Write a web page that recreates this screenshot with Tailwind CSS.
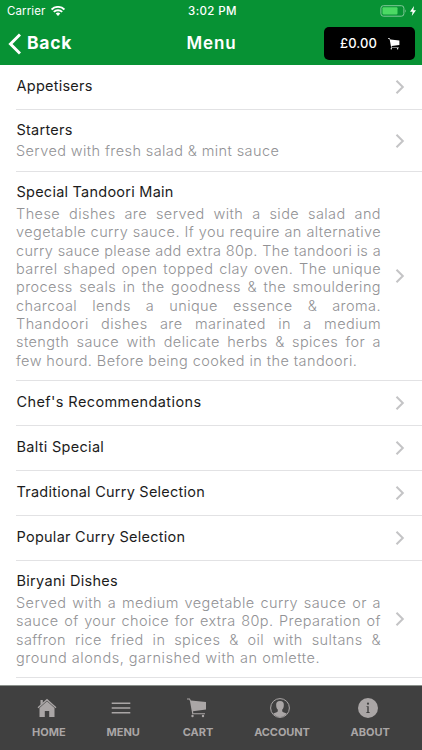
<!DOCTYPE html>
<html lang="en">
<head>
<meta charset="utf-8">
<title>Menu</title>
<script src="https://cdn.jsdelivr.net/npm/@tailwindcss/browser@4"></script>
</head>
<body class="bg-white">
<svg class="hidden"><defs>
<symbol id="chev" viewBox="0 0 10 16"><path d="M1.500 1.800 7.800 8l-6.300 6.200" fill="none" stroke="#c4c4c6" stroke-width="2"/></symbol>
<symbol id="cart" viewBox="0 0 20 20"><path d="M0 .5h2.800l1.100 2L19 4v7.500L6 13.300l.3 2H18v1H5.300L3 3.200 2.300 1.500H0z" fill="currentColor"/><circle cx="5.500" cy="18" r="1.200" fill="currentColor"/><circle cx="16" cy="18" r="1.200" fill="currentColor"/></symbol>
</defs></svg>
<div class="flex h-[750px] w-[422px] flex-col overflow-hidden font-['Inter','Noto_Sans',sans-serif]">
<header class="h-[65px] shrink-0 bg-[#079234] text-white">
  <div class="grid h-[22px] grid-cols-3 items-center pr-[6px] pl-[7px] text-[11.5px] leading-[22px]">
    <div class="flex items-center gap-[6px]"><span class="tracking-[0.1px]">Carrier</span>
      <svg class="h-[10px] w-[14px]" viewBox="0 0 14 10" fill="none" stroke="white" stroke-width="1.900"><path d="M.6 3.500a9.200 9.200 0 0 1 12.800 0M2.800 5.900a6 6 0 0 1 8.400 0"/><path d="M4.700 7.500a3.300 3.300 0 0 1 4.600 0L7 9.900z" fill="white" stroke="none"/></svg></div>
    <div class="pl-[2px] text-center font-medium tracking-[0.4px]">3:02 PM</div>
    <div class="flex items-center justify-end gap-[3px]">
      <svg class="h-[12px] w-[27px]" viewBox="0 0 27 12"><rect x=".9" y=".7" width="23" height="10.500" rx="2.500" fill="none" stroke="#83c99a"/><rect x="2.500" y="2.300" width="15" height="7.300" rx="1" fill="#4cd964"/><path d="M25.200 4.200q1.500 1.700 0 3.500z" fill="#83c99a"/></svg>
      <svg class="h-[10px] w-[6px]" viewBox="0 0 6 10"><path d="M4 0 0 5.700h2.600L1.800 10 6 4.200H3.400z" fill="white"/></svg>
    </div>
  </div>
  <div class="grid h-[43px] grid-cols-3 items-center pr-[7px] pl-[8px]">
    <div class="flex items-center gap-[6px] text-[17.500px] font-bold"><svg class="h-[22px] w-[13px]" viewBox="0 0 13 22"><path d="M12 1.500 2.500 11l9.500 9.500" fill="none" stroke="white" stroke-width="3"/></svg><span class="tracking-[0.7px]">Back</span></div>
    <div class="text-center text-[17px] font-semibold tracking-[0.9px]">Menu</div>
    <div class="flex h-[33px] w-[91px] items-center justify-between justify-self-end rounded-[5px] bg-black pr-[15px] pl-[16px] text-[13px] font-medium"><span class="tracking-[0.1px]">£0.00</span><svg class="size-[12px]"><use href="#cart" width="12" height="12"/></svg></div>
  </div>
</header>
<main class="h-[620px] shrink-0 overflow-hidden pl-[16px] text-[14.500px] leading-[20px] text-[#1c1c1c]">
  <section class="flex h-[45px] items-center justify-between border-b border-[#e2e2e4] pr-[17px]"><h2 class="mt-[-2px] pl-[0.5px] tracking-[0.25px]">Appetisers</h2><svg class="h-[16px] w-[10px]"><use href="#chev"/></svg></section>
  <section class="flex h-[62px] items-center justify-between border-b border-[#e2e2e4] pr-[17px]"><div class="w-[365px]"><h2 class="pl-[0.5px] tracking-[0.25px]">Starters</h2><p class="mt-[2px] leading-[18.300px] tracking-[0.400px] text-[#929295] font-light">Served with fresh salad &amp; mint sauce</p></div><svg class="h-[16px] w-[10px]"><use href="#chev"/></svg></section>
  <section class="flex h-[209px] items-center justify-between border-b border-[#e2e2e4] pr-[17px]"><div class="w-[365px]"><h2 class="pl-[0.5px] tracking-[0.24px]">Special Tandoori Main</h2>
    <div class="mt-[3px] leading-[18.300px] font-light tracking-[0.42px] text-[#929295]">
      <p class="text-justify whitespace-nowrap [text-align-last:justify]">These dishes are served with a side salad and</p>
      <p class="text-justify whitespace-nowrap [text-align-last:justify]">vegetable curry sauce. If you require an alternative</p>
      <p class="text-justify tracking-[0.32px] whitespace-nowrap [text-align-last:justify]">curry sauce please add extra 80p. The tandoori is a</p>
      <p class="text-justify whitespace-nowrap [text-align-last:justify]">barrel shaped open topped clay oven. The unique</p>
      <p class="text-justify whitespace-nowrap [text-align-last:justify]">process seals in the goodness &amp; the smouldering</p>
      <p class="text-justify whitespace-nowrap [text-align-last:justify]">charcoal lends a unique essence &amp; aroma.</p>
      <p class="text-justify whitespace-nowrap [text-align-last:justify]">Thandoori dishes are marinated in a medium</p>
      <p class="text-justify whitespace-nowrap [text-align-last:justify]">stength sauce with delicate herbs &amp; spices for a</p>
      <p>few hourd. Before being cooked in the tandoori.</p>
    </div></div><svg class="h-[16px] w-[10px]"><use href="#chev"/></svg></section>
  <section class="flex h-[45px] items-center justify-between border-b border-[#e2e2e4] pr-[17px]"><h2 class="mt-[-2px] pl-[0.5px] tracking-[0.4px]">Chef's Recommendations</h2><svg class="h-[16px] w-[10px]"><use href="#chev"/></svg></section>
  <section class="flex h-[45px] items-center justify-between border-b border-[#e2e2e4] pr-[17px]"><h2 class="mt-[-2px] pl-[0.5px] tracking-[0.3px]">Balti Special</h2><svg class="h-[16px] w-[10px]"><use href="#chev"/></svg></section>
  <section class="flex h-[45px] items-center justify-between border-b border-[#e2e2e4] pr-[17px]"><h2 class="mt-[-2px] pl-[0.5px] tracking-[0.24px]">Traditional Curry Selection</h2><svg class="h-[16px] w-[10px]"><use href="#chev"/></svg></section>
  <section class="flex h-[45px] items-center justify-between border-b border-[#e2e2e4] pr-[17px]"><h2 class="mt-[-2px] pl-[0.5px] tracking-[0.26px]">Popular Curry Selection</h2><svg class="h-[16px] w-[10px]"><use href="#chev"/></svg></section>
  <section class="flex h-[117px] items-center justify-between border-b border-[#e2e2e4] pr-[17px]"><div class="w-[365px]"><h2 class="pl-[0.5px] tracking-[0.3px]">Biryani Dishes</h2>
    <div class="mt-[3px] leading-[18.300px] font-light tracking-[0.42px] text-[#929295]">
      <p class="text-justify whitespace-nowrap [text-align-last:justify]">Served with a medium vegetable curry sauce or a</p>
      <p class="text-justify whitespace-nowrap [text-align-last:justify]">sauce of your choice for extra 80p. Preparation of</p>
      <p class="text-justify whitespace-nowrap [text-align-last:justify]">saffron rice fried in spices &amp; oil with sultans &amp;</p>
      <p class="tracking-[0.520px]">ground alonds, garnished with an omlette.</p>
    </div></div><svg class="h-[16px] w-[10px]"><use href="#chev"/></svg></section>
</main>
<nav class="flex h-[65px] shrink-0 justify-between border-t border-[#8b918c] bg-[#404040] pr-[32px] pl-[32px] text-[11px] font-bold text-[#aaa6a6]">
  <a class="flex flex-col items-center pt-[12px]"><svg class="mr-[4px] size-[20px]" viewBox="0 0 20 20" fill="currentColor"><path d="M10 3.300 2.500 10v9h5.300v-6h4.400v6h5.300v-9z"/><path d="M1 9.800 10 1.700l9 8.100" fill="none" stroke="currentColor" stroke-width="1.300"/><path d="M3.500 2h2.300v3L3.500 7z"/></svg><span class="mt-[6px] leading-[16px]">HOME</span></a>
  <a class="flex flex-col items-center pt-[12px]"><svg class="mr-[4px] size-[20px]" viewBox="0 0 20 20"><path d="M.7 5.300h18.600M.7 10h18.600M.7 14.700h18.600" stroke="currentColor" stroke-width="1.500"/></svg><span class="mt-[6px] leading-[16px]">MENU</span></a>
  <a class="flex flex-col items-center pt-[12px] pl-[2px]"><svg class="mr-[3px] size-[20px]"><use href="#cart"/></svg><span class="mt-[6px] leading-[16px]">CART</span></a>
  <a class="flex flex-col items-center pt-[12px]"><svg class="mr-[4px] size-[20px]" viewBox="0 0 20 20"><circle cx="10" cy="10" r="9.400" fill="none" stroke="currentColor"/><path d="M10 3c3 0 4.200 1.900 3.800 4.400 0 2-.7 3.300-1.600 4.200v1.600c.4 1 2.800 1.300 4.600 2.300A9 9 0 0 1 10 19a9 9 0 0 1-6.800-3.500c1.800-1 4.200-1.300 4.600-2.300v-1.600c-.9-.9-1.600-2.200-1.600-4.200C5.800 4.900 7 3 10 3z" fill="currentColor"/></svg><span class="mt-[6px] leading-[16px] tracking-[-0.1px]">ACCOUNT</span></a>
  <a class="flex flex-col items-center pt-[12px]"><svg class="mr-[4px] size-[20px]" viewBox="0 0 20 20"><circle cx="10" cy="10" r="10" fill="currentColor"/><circle cx="10" cy="5.700" r="1.100" fill="#404040"/><path d="M8.500 8.200h2.200v5.800h.9v.9h-3.200V14h.9V9.100h-.8z" fill="#404040"/></svg><span class="mt-[6px] leading-[16px]">ABOUT</span></a>
</nav>
</div>
</body>
</html>
